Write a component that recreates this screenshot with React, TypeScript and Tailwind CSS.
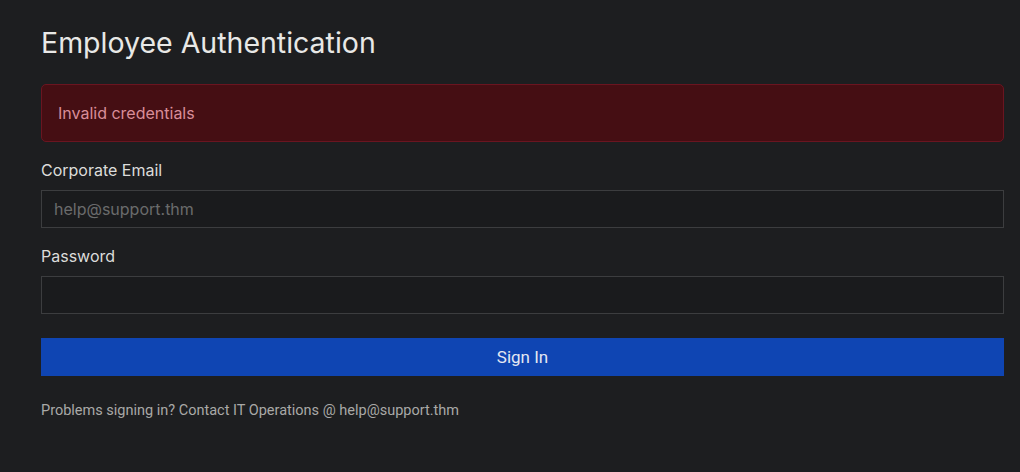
export default function App() {
  return (
    <div className="min-h-[472px] w-full bg-[#1d1e20] pl-[41px] pr-[16px] pt-[24px] font-['Inter',sans-serif]">
      <h1 className="text-[28.5px] leading-[38px] text-[#e8e8e6] font-normal">Employee Authentication</h1>
      <div className="mt-[22px] flex h-[58px] items-center rounded-[5px] border border-[#6a1520] bg-[#450e13] px-[16px] text-[16px] text-[#d98d99]">
        Invalid credentials
      </div>
      <form className="mt-[16px] flex flex-col" onSubmit={(e) => e.preventDefault()}>
        <label className="text-[16px] leading-[24px] text-[#dcdcda]">Corporate Email</label>
        <input
          type="email"
          placeholder="help@support.thm"
          className="mt-[8px] h-[38px] w-full border border-[#3c3d3f] bg-[#1a1b1d] px-[12px] text-[16px] text-[#ddd] placeholder:text-[#6a6b6c] outline-none"
        />
        <label className="mt-[16px] text-[16px] leading-[24px] text-[#dcdcda]">Password</label>
        <input
          type="password"
          className="mt-[8px] h-[38px] w-full border border-[#3c3d3f] bg-[#1a1b1d] px-[12px] text-[16px] text-[#ddd] outline-none"
        />
        <button
          type="submit"
          className="mt-[24px] h-[38px] w-full bg-[#0f45b3] pt-[1px] font-['Roboto',sans-serif] text-[17px] text-[#e4e8f2]"
        >
          Sign In
        </button>
      </form>
      <p className="mt-[25px] font-['Roboto',sans-serif] text-[14.5px] leading-[20px] text-[#a9a9a7]">
        Problems signing in? Contact IT Operations @ help@support.thm
      </p>
    </div>
  );
}
